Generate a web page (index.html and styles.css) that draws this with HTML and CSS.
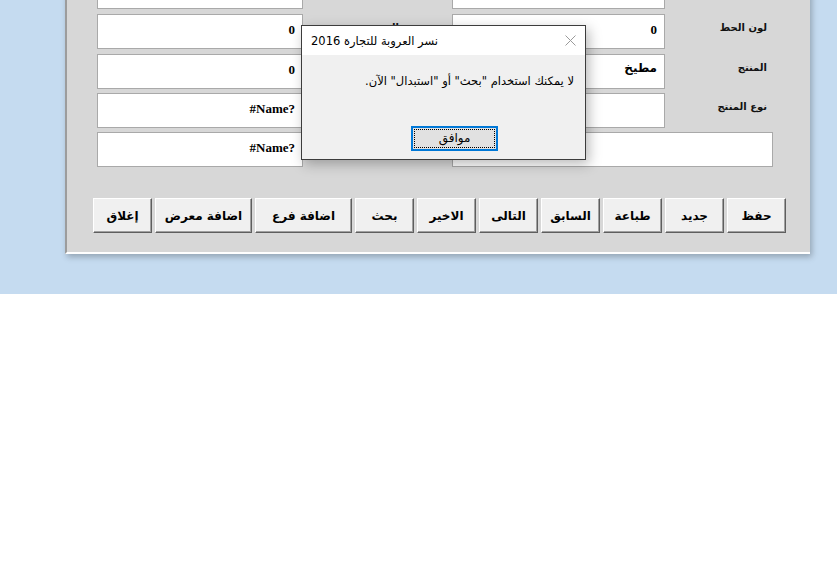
FILE: index.html
```
<!DOCTYPE html>
<html lang="ar">
<head>
    <meta charset="UTF-8">
    <title>نسر العروبة للتجارة 2016</title>
    <link rel="stylesheet" href="styles.css">
</head>
<body>

<div class="desktop">
    <div class="window">
        <div class="fields">
            <div class="field"></div>
            <div class="label mid"></div>
            <div class="field"></div>
            <div class="label"></div>

            <div class="field">0</div>
            <div class="label mid">السعر</div>
            <div class="field">0</div>
            <div class="label">لون الحط</div>

            <div class="field">0</div>
            <div class="label mid"></div>
            <div class="field arabic">مطيخ</div>
            <div class="label">المنتج</div>

            <div class="field">#Name?</div>
            <div class="label mid"></div>
            <div class="field"></div>
            <div class="label">نوع المنتج</div>

            <div class="field">#Name?</div>
            <div class="label mid"></div>
            <div class="field wide"></div>
        </div>

        <div class="buttons" dir="rtl">
            <button class="btn">حفظ</button>
            <button class="btn">جديد</button>
            <button class="btn">طباعة</button>
            <button class="btn">السابق</button>
            <button class="btn">التالى</button>
            <button class="btn">الاخير</button>
            <button class="btn">بحث</button>
            <button class="btn btn-wide">اضافة فرع</button>
            <button class="btn btn-wide">اضافة معرض</button>
            <button class="btn">إغلاق</button>
        </div>
    </div>

    <!-- رسالة الخطأ فوق النموذج -->
    <div class="msgbox">
        <div class="msgbox-title">
            <span>نسر العروبة للتجارة 2016</span>
            <svg class="msgbox-close" width="11" height="11" viewBox="0 0 11 11">
                <path d="M0.5 0.5 L10.5 10.5 M10.5 0.5 L0.5 10.5" stroke="#9a9a9a" stroke-width="1" fill="none"/>
            </svg>
        </div>
        <div class="msgbox-body">
            <p class="msgbox-text" dir="rtl">لا يمكنك استخدام "بحث" أو "استبدال" الآن.</p>
            <div class="msgbox-actions">
                <button class="ok"><span>موافق</span></button>
            </div>
        </div>
    </div>
</div>

</body>
</html>
```

FILE: styles.css
```
body {
    margin: 0;
    padding: 0;
    background: #fff;
    font-family: "DejaVu Sans", sans-serif;
}
.desktop {
    position: relative;
    height: 294px;
    background-color: #c5dbf0;
    overflow: hidden;
}
.window {
    margin: -28px 0 0 65px;
    width: 743px;
    padding-top: 2px;
    background-color: #d7d7d7;
    border-left: 2px solid #9c9c9c;
    border-bottom: 2px solid #fff;
    box-shadow: 2px 3px 6px rgba(0, 0, 0, 0.25);
}
.fields {
    display: grid;
    grid-template-columns: 206px 149px 213px 108px;
    grid-template-rows: 36px 36px 35px 35px 35px;
    row-gap: 4px;
    padding-left: 30px;
}
.field {
    box-sizing: border-box;
    height: 35px;
    background: #fff;
    border: 1px solid #a9a9a9;
    padding: 7px 7px 0 0;
    text-align: right;
    font-family: "Liberation Serif", "DejaVu Sans", serif;
    font-weight: bold;
    font-size: 13px;
    color: #000;
}
.field.arabic {
    font-family: "DejaVu Sans", sans-serif;
    font-size: 12px;
    padding-top: 6px;
}
.field.wide {
    grid-column: 3 / 5;
}
.label {
    padding: 8px 6px 0 0;
    text-align: right;
    font-size: 10px;
    font-weight: bold;
    color: #111;
    direction: rtl;
}
.label.mid {
    padding-right: 53px;
}
.buttons {
    display: flex;
    gap: 3px;
    padding: 31px 24px 19px 0;
}
.btn {
    box-sizing: border-box;
    width: 59px;
    height: 35px;
    padding: 0;
    background-color: #f0f0f0;
    border: 1px solid;
    border-color: #fff #5e5e5e #5e5e5e #fff;
    box-shadow: inset -1px -1px 0 #a0a0a0;
    font-family: "DejaVu Sans", sans-serif;
    font-weight: bold;
    font-size: 12px;
    color: #000;
}
.btn-wide {
    width: 97px;
}
.msgbox {
    position: absolute;
    left: 301px;
    top: 25px;
    width: 283px;
    height: 133px;
    border: 1px solid #3c3c3c;
    background-color: #f0f0f0;
    box-shadow: 3px 4px 12px rgba(0, 0, 0, 0.28);
}
.msgbox-title {
    height: 29px;
    background: #fff;
    display: flex;
    justify-content: space-between;
    align-items: center;
    padding: 0 9px 0 9px;
    font-size: 11.5px;
    color: #000;
}
.msgbox-text {
    margin: 0;
    padding: 19px 11px 0 0;
    font-size: 11.5px;
    color: #000;
}
.msgbox-actions {
    padding: 38px 0 0 109px;
}
.ok {
    box-sizing: border-box;
    width: 87px;
    height: 25px;
    padding: 1px;
    background-color: #e1e1e1;
    border: 2px solid #0078d7;
    font-family: "DejaVu Sans", sans-serif;
    font-size: 12px;
    color: #000;
}
.ok span {
    display: block;
    height: 100%;
    box-sizing: border-box;
    border: 1px dotted #000;
    line-height: 17px;
}
```
